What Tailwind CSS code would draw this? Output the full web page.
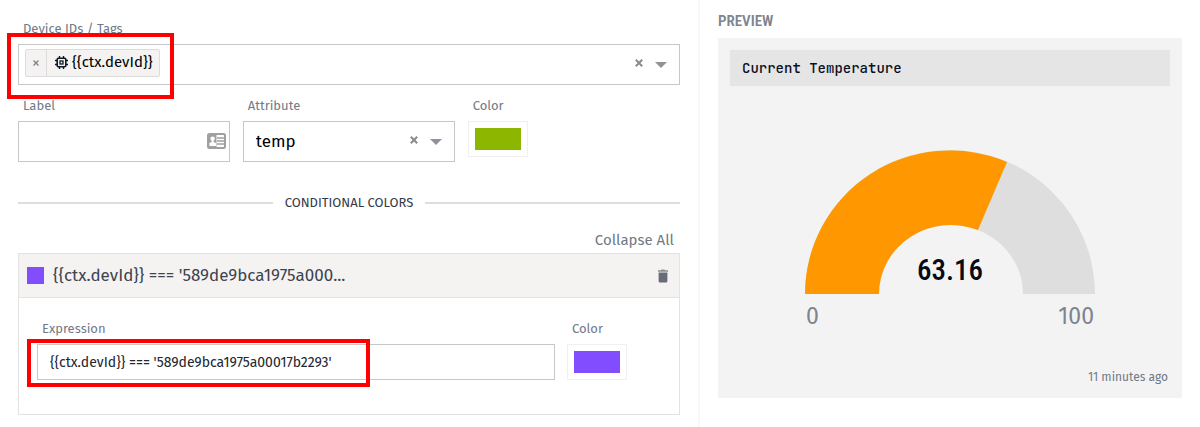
<!DOCTYPE html>
<html lang="en">
<head>
    <meta charset="UTF-8">
    <meta name="viewport" content="width=device-width, initial-scale=1.0">
    <script src="https://cdn.jsdelivr.net/npm/@tailwindcss/browser@4"></script>
    <title>Gauge settings</title>
</head>

<body class="min-h-screen bg-white font-['Fira_Sans','Noto_Sans',sans-serif] text-[#3d4350]">
    <div class="flex min-h-screen">
        <!-- Settings -->
        <main class="w-7/12 border-r-2 border-[#faf7f7] px-[18px] pt-[18px]">
            <label for="devices" class="mb-1 block pl-[5px] text-[13px] leading-[22px] text-[#717986]">Device IDs / Tags</label>
            <div class="relative flex h-[41px] items-center border border-[#c6c8c8] pr-3 pl-1.5">
                <div class="mb-1 flex h-7 items-center rounded-xs border border-[#dcdcdc] bg-[#f4f3f2] text-black">
                    <button type="button" aria-label="Remove device" class="flex h-full w-[21px] items-center justify-center border-r border-[#dcdcdc]">
                        <svg class="size-[6px]" viewBox="0 0 6 6" stroke="#7d8490" stroke-width="1.4"><path d="M.5 .5l5 5M5.5 .5l-5 5" /></svg>
                    </button>
                    <svg class="ml-2 size-[13px]" viewBox="0 0 13 13" fill="none" stroke="#111827">
                        <rect x="2.2" y="2.2" width="8.6" height="8.6" rx="1.2" stroke-width="1.6" />
                        <rect x="5" y="5" width="3" height="3" stroke-width="1.3" />
                        <path d="M4.5 0v2M8.5 0v2M4.5 11v2M8.5 11v2M0 4.5h2M0 8.5h2M11 4.5h2M11 8.5h2" stroke-width="1.4" />
                    </svg>
                    <span class="pr-1.5 pl-1 text-[15px]">{{ctx.devId}}</span>
                </div>
                <input id="devices" type="text" class="h-full min-w-0 flex-1 outline-none">
                <button type="button" aria-label="Clear devices" class="mb-1">
                    <svg class="block size-2" viewBox="0 0 8 8" stroke="#868b93" stroke-width="2"><path d="M.8 .8l6.4 6.4M7.2 .8l-6.4 6.4" /></svg>
                </button>
                <svg class="ml-3 h-[6px] w-3" viewBox="0 0 12 6" fill="#8f9298"><path d="M0 0h12L6 6z" /></svg>
                <div class="pointer-events-none absolute -top-3 -left-3 h-[66px] w-[167px] border-4 border-[#ff0000]"></div>
            </div>

            <div class="mt-[10px] grid grid-cols-[32%_32%_1fr] gap-[13px]">
                <div>
                    <label for="label" class="mb-1 block pl-[5px] text-[13px] leading-[22px] text-[#717986]">Label</label>
                    <div class="relative">
                        <input id="label" type="text" class="block h-[41px] w-full border border-[#c6c8c8] px-3 outline-none">
                        <svg class="absolute top-3 right-1 h-4 w-[19px]" viewBox="0 0 19 16">
                            <rect x="1" y="1" width="17" height="14" rx="1.5" fill="#fff" stroke="#a0a0a0" stroke-width="2" />
                            <path d="M2 2h7.5v12H2z" fill="#a0a0a0" />
                            <circle cx="5.6" cy="5.6" r="2.2" fill="#fff" />
                            <path d="M4.6 7h2v2l2.4 1v3H2.4v-3l2.2-1z" fill="#fff" />
                            <path d="M10 5h7M10 8h7M10 11h7" stroke="#a0a0a0" stroke-width="1.4" />
                        </svg>
                    </div>
                </div>
                <div>
                    <label for="attribute" class="mb-1 block pl-[5px] text-[13px] leading-[22px] text-[#717986]">Attribute</label>
                    <div class="relative">
                        <select id="attribute" class="block h-[41px] w-full appearance-none border border-[#c6c8c8] pl-3 text-[17px] text-black outline-none">
                            <option>temp</option>
                        </select>
                        <div class="pointer-events-none absolute inset-y-0 right-[13px] flex items-center">
                            <button type="button" aria-label="Clear attribute" class="pointer-events-auto mb-1">
                                <svg class="block size-2" viewBox="0 0 8 8" stroke="#868b93" stroke-width="2"><path d="M.8 .8l6.4 6.4M7.2 .8l-6.4 6.4" /></svg>
                            </button>
                            <svg class="ml-3 h-[6px] w-3" viewBox="0 0 12 6" fill="#8f9298"><path d="M0 0h12L6 6z" /></svg>
                        </div>
                    </div>
                </div>
                <div>
                    <label for="color" class="mb-1 block pl-[5px] text-[13px] leading-[22px] text-[#717986]">Color</label>
                    <input id="color" type="color" value="#8db600" class="block h-9 w-[60px] appearance-none border border-[#f0f0f0] bg-white p-1.5 [&::-webkit-color-swatch]:border-0 [&::-webkit-color-swatch-wrapper]:p-0">
                </div>
            </div>

            <div class="mt-[30px] flex items-center gap-3 text-[13px] leading-[22px] text-[#343a48]">
                <span class="h-0.5 flex-1 bg-[#dcdddd]"></span>
                <h2>CONDITIONAL COLORS</h2>
                <span class="h-0.5 flex-1 bg-[#dcdddd]"></span>
            </div>

            <div class="mt-[15px] flex justify-end pr-1.5">
                <button type="button" class="text-[15px] leading-[22px] text-[#717986]">Collapse All</button>
            </div>

            <section class="mt-0.5 border border-[#e3e3e3]">
                <header class="flex h-11 items-center border-b border-[#e3e3e3] bg-[#f4f3f2] pr-[11px] pl-2">
                    <span class="size-[17px] bg-[#824dff]"></span>
                    <h3 class="flex-1 pl-[9px] text-[17px] text-[#3d4350]">{{ctx.devId}} === '589de9bca1975a000...</h3>
                    <button type="button" aria-label="Delete condition">
                        <svg class="h-[14px] w-[10px]" viewBox="0 0 10 14"><path d="M0 1.2h3L3.5 .5h3l.5 .7h3v1.6H0z" fill="#8c8c8c" /><path d="M.6 3.5h8.8V12a1.5 1.5 0 0 1-1.5 1.5H2.1A1.5 1.5 0 0 1 .6 12z" fill="#686c76" /></svg>
                    </button>
                </header>
                <div class="flex gap-3 pt-5 pr-[52px] pb-[34px] pl-[18px]">
                    <div class="min-w-0 flex-1">
                        <label for="expression" class="mb-1 block pl-[5px] text-[13px] leading-[22px] text-[#717986]">Expression</label>
                        <div class="relative">
                            <input id="expression" type="text" value="{{ctx.devId}} === '589de9bca1975a00017b2293'" class="block h-9 w-full border border-[#c6c8c8] px-3 text-[14px] text-[#22262e] outline-none">
                            <div class="pointer-events-none absolute -top-[5px] -left-[10px] h-12 w-[343px] border-4 border-[#ff0000]"></div>
                        </div>
                    </div>
                    <div>
                        <label for="expression-color" class="mb-1 block pl-[5px] text-[13px] leading-[22px] text-[#717986]">Color</label>
                        <input id="expression-color" type="color" value="#824dff" class="block h-9 w-[60px] appearance-none border border-[#f0f0f0] bg-white p-1.5 [&::-webkit-color-swatch]:border-0 [&::-webkit-color-swatch-wrapper]:p-0">
                    </div>
                </div>
            </section>
        </main>

        <!-- Preview -->
        <aside class="w-5/12 px-[18px] pt-[11px]">
            <h2 class="mb-[7px] font-['Roboto_Condensed',Roboto,sans-serif] text-[15px] leading-5 font-semibold text-[#7d8490]">PREVIEW</h2>
            <div class="bg-[#f3f3f3] px-3 pt-3 pb-2.5">
                <h3 class="bg-[#e5e5e5] px-3 font-['JetBrains_Mono','DejaVu_Sans_Mono',monospace] text-[14px] leading-9 font-medium text-[#0b0f1c]">Current Temperature</h3>
                <div class="relative mx-auto mt-16 w-[290px]">
                    <svg class="block w-full" viewBox="0 0 290 144">
                        <path d="M0 144A145 144 0 0 1 290 144H218A72 69 0 0 0 74 144z" fill="#dedede" />
                        <path d="M0 144A145 143.5 0 0 1 202 12L173 80A72 69 0 0 0 74 144z" fill="#ff9800" />
                    </svg>
                    <p class="absolute inset-x-0 bottom-2 text-center font-['Roboto_Condensed',Roboto,sans-serif] text-[29px] leading-8 font-medium text-[#070a14]">63.16</p>
                </div>
                <div class="mx-auto mt-2 flex w-[290px] justify-between px-px text-[23px] leading-7 text-[#7d8490]">
                    <span>0</span>
                    <span>100</span>
                </div>
                <p class="mt-9 pr-0.5 text-right text-[12px] leading-[22px] text-[#717986]">11 minutes ago</p>
            </div>
        </aside>
    </div>
</body>
</html>
